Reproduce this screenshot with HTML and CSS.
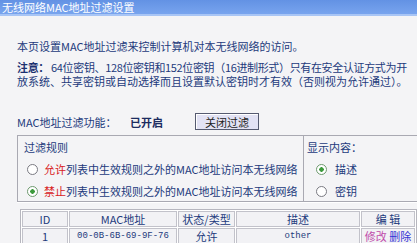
FILE: index.html
```html
<!DOCTYPE html>
<html lang="zh-CN">
<head>
  <meta charset="UTF-8" />
  <meta name="viewport" content="width=device-width, initial-scale=1.0" />
  <title>无线网络MAC地址过滤设置</title>
  <link rel="stylesheet" href="styles.css">
</head>
<body>
  <div class="title-bar">无线网络MAC地址过滤设置</div>

  <div class="page">
    <p class="intro">本页设置MAC地址过滤来控制计算机对本无线网络的访问。</p>

    <p class="note">
      <span class="note-line tight"><b>注意：</b> 64位密钥、128位密钥和152位密钥（16进制形式）只有在安全认证方式为开</span>
      <span class="note-line">放系统、共享密钥或自动选择而且设置默认密钥时才有效（否则视为允许通过）。</span>
    </p>

    <div class="filter-row">
      <span class="filter-label">MAC地址过滤功能：</span>
      <span class="filter-state">已开启</span>
      <button class="filter-button">关闭过滤</button>
    </div>

    <div class="rules">
      <div class="rules-left">
        <div class="box-title">过滤规则</div>
        <div class="radio-row"><span class="radio"></span><span><em class="warn">允许</em>列表中生效规则之外的MAC地址访问本无线网络</span></div>
        <div class="radio-row"><span class="radio checked"></span><span><em class="warn">禁止</em>列表中生效规则之外的MAC地址访问本无线网络</span></div>
      </div>
      <div class="rules-right">
        <div class="box-title">显示内容：</div>
        <div class="radio-row"><span class="radio checked"></span><span>描述</span></div>
        <div class="radio-row"><span class="radio"></span><span>密钥</span></div>
      </div>
    </div>

    <table class="mac-table">
      <tr>
        <th class="col-id">ID</th>
        <th class="col-mac">MAC地址</th>
        <th class="col-state">状态/类型</th>
        <th class="col-desc">描述</th>
        <th class="col-edit">编 辑</th>
      </tr>
      <tr>
        <td>1</td>
        <td class="mono">00-0B-6B-69-9F-76</td>
        <td>允许</td>
        <td class="mono">other</td>
        <td><a class="edit-link">修改</a> <a class="delete-link">删除</a></td>
      </tr>
    </table>
  </div>
</body>
</html>
```

FILE: styles.css
```css
* {
  margin: 0;
  padding: 0;
  box-sizing: border-box;
}

body {
  font-family: "Noto Sans CJK SC", "DejaVu Sans", sans-serif;
  font-size: 11px;
  line-height: 14px;
  color: #233a7c;
  background: #f4f4f6;
  width: 417px;
  height: 243px;
  overflow: hidden;
}

.title-bar {
  height: 16px;
  line-height: 14px;
  padding-left: 2px;
  color: #ffffff;
  background: linear-gradient(#6392e4, #78a4ee);
  border-bottom: 2px solid #a8c5f5;
}

.page {
  width: 440px;
  padding-left: 17px;
}

.intro {
  margin-top: 23px;
  white-space: nowrap;
}

.note {
  margin-top: 7px;
  white-space: nowrap;
}

.note-line {
  display: block;
  height: 14px;
}

.note-line.tight {
  letter-spacing: -0.35px;
}

.note b {
  color: #1c3170;
}

.filter-row {
  display: flex;
  align-items: center;
  height: 17px;
  margin-top: 25px;
}

.filter-label {
  width: 113px;
}

.filter-state {
  width: 65px;
  font-weight: bold;
  color: #1c2c60;
}

.filter-button {
  width: 64px;
  height: 17px;
  font-family: inherit;
  font-size: 11px;
  line-height: 14px;
  color: #222;
  background: #e2e2f4;
  border: 1px solid #555a70;
  box-shadow: inset 1px 1px #ffffff;
}

.rules {
  display: flex;
  margin-top: 5px;
  height: 67px;
  border-top: 1px solid #a9a9b2;
  border-bottom: 1px solid #a9a9b2;
  box-shadow: 0 1px #ffffff;
}

.rules-left {
  width: 287px;
  padding: 4px 0 0 6px;
  border-left: 1px solid #a9a9b2;
  border-right: 1px solid #a9a9b2;
}

.rules-right {
  flex: 1;
  padding: 4px 0 0 3px;
}

.box-title {
  height: 14px;
  margin-bottom: 4px;
}

.radio-row {
  display: flex;
  align-items: center;
  gap: 6px;
  height: 22px;
  padding-left: 3px;
}

.rules-right .radio-row {
  padding-left: 9px;
  gap: 8px;
}

.radio {
  width: 11px;
  height: 11px;
  border-radius: 50%;
  border: 1px solid #7a7a82;
  background: #ffffff;
  flex-shrink: 0;
}

.radio.checked {
  border-color: #6f9a6f;
  background: radial-gradient(circle, #3c9a3c 0 2px, #ffffff 2.5px);
}

.warn {
  font-style: normal;
  color: #d8201c;
}

.mac-table {
  margin: 7px 0 0 3px;
  border-collapse: separate;
  border-spacing: 1px;
  background: #ffffff;
  border: 1px solid #b6b6be;
}

.mac-table th,
.mac-table td {
  height: 16px;
  padding: 0;
  font-weight: normal;
  text-align: center;
  background: #f2f2f5;
  border: 1px solid #c2c2ca;
  white-space: nowrap;
}

.col-id { width: 46px; }
.col-mac { width: 108px; }
.col-state { width: 57px; }
.col-desc { width: 124px; }
.col-edit { width: 54px; }

.mono {
  font-family: "Liberation Mono", monospace;
  font-size: 9px;
}

.edit-link {
  color: #c04aaa;
}

.delete-link {
  color: #3434d4;
}
```
